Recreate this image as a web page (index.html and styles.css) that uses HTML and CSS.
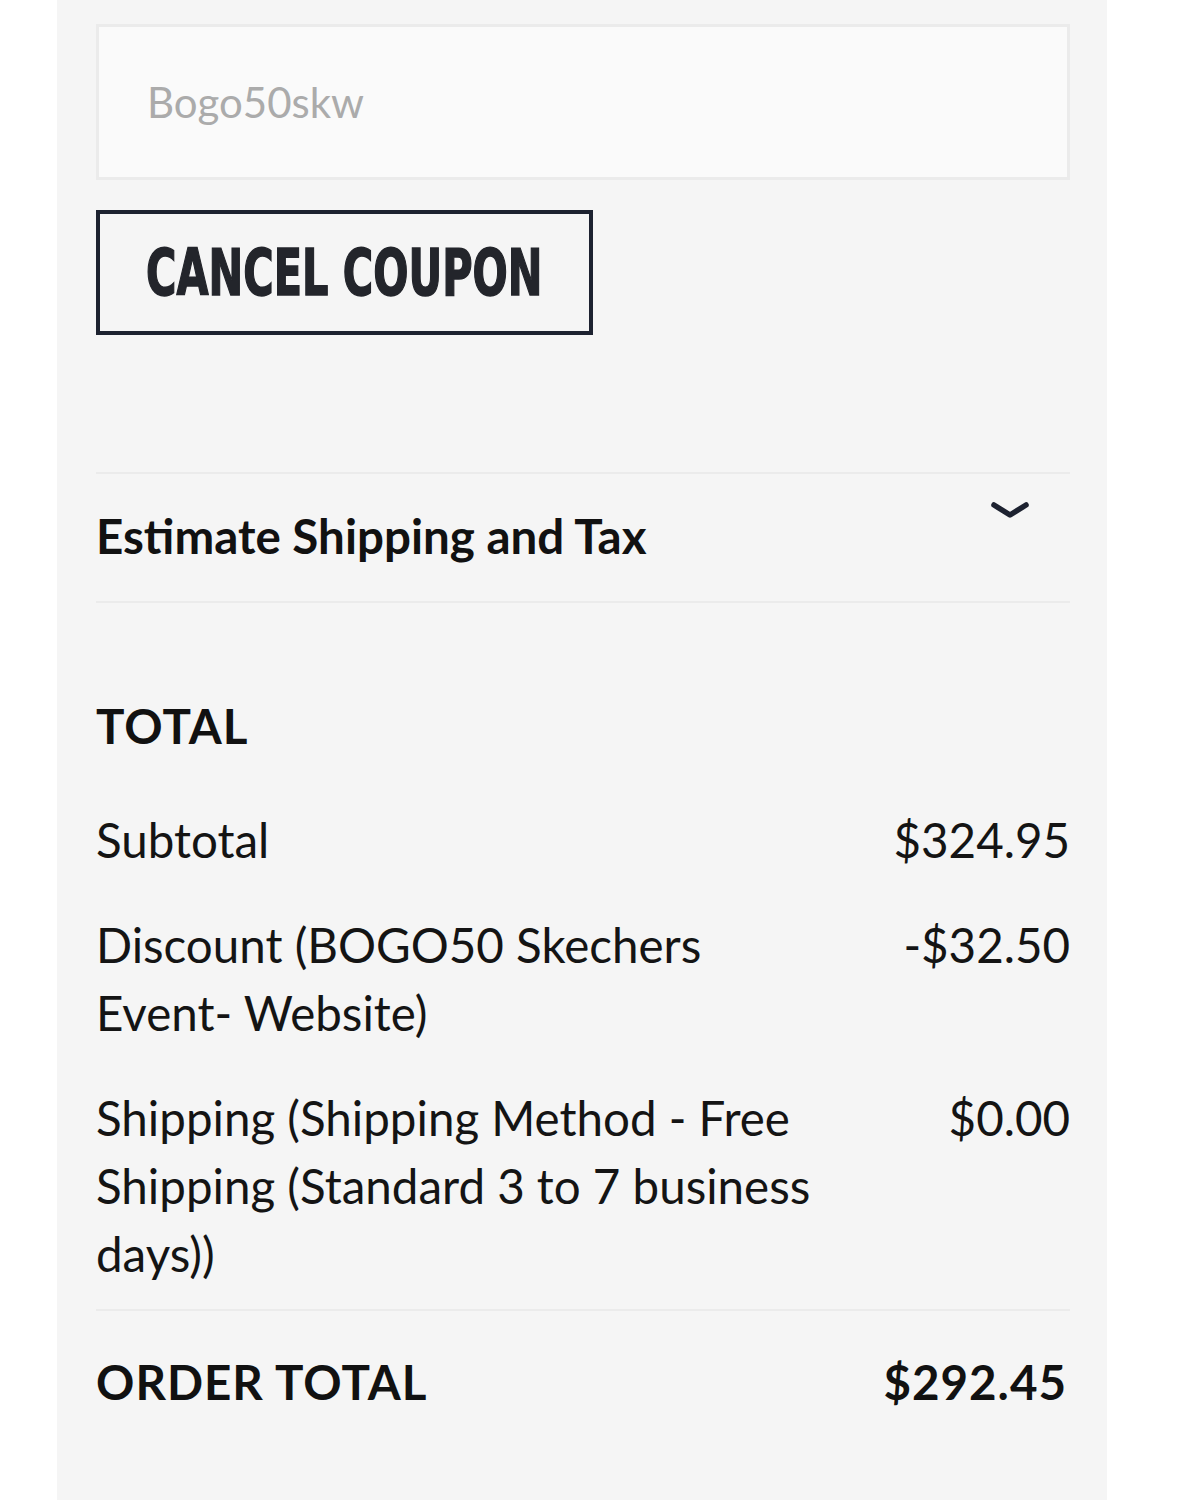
FILE: index.html
```html
<!DOCTYPE html>
<html lang="en">
<head>
<meta charset="utf-8">
<title>Cart summary</title>
<link rel="stylesheet" href="styles.css">
</head>
<body>
<div class="panel">
  <div class="coupon">
    <input class="coupon-input" type="text" placeholder="Bogo50skw">
  </div>
  <button class="cancel-btn" type="button"><span class="cancel-label">CANCEL COUPON</span></button>

  <div class="estimate">
    <span class="estimate-title">Estimate Shipping and Tax</span>
    <svg class="chevron" viewBox="0 0 40 20" width="40" height="20" aria-hidden="true">
      <path d="M4 5 L20 15 L36 5" fill="none" stroke="#1d2230" stroke-width="5.5" stroke-linecap="round" stroke-linejoin="round"/>
    </svg>
  </div>

  <div class="totals">
    <div class="totals-heading">TOTAL</div>
    <div class="line">
      <span class="line-label">Subtotal</span>
      <span class="line-value">$324.95</span>
    </div>
    <div class="line">
      <span class="line-label">Discount (BOGO50 Skechers Event- Website)</span>
      <span class="line-value">-$32.50</span>
    </div>
    <div class="line">
      <span class="line-label">Shipping (Shipping Method - Free Shipping (Standard 3 to 7 business days))</span>
      <span class="line-value">$0.00</span>
    </div>
  </div>

  <div class="order-total">
    <span class="order-label">ORDER TOTAL</span>
    <span class="order-value">$292.45</span>
  </div>
</div>
</body>
</html>
```
FILE: styles.css
```css
html, body {
  margin: 0;
  padding: 0;
  background: #ffffff;
}

body {
  font-family: Lato, "Noto Sans", "Liberation Sans", sans-serif;
  color: #141414;
}

.panel {
  margin-left: 57px;
  width: 1050px;
  min-height: 1500px;
  box-sizing: border-box;
  padding: 24px 37px 0 39px;
  background: #f5f5f5;
}

.coupon-input {
  display: block;
  width: 100%;
  height: 156px;
  box-sizing: border-box;
  margin: 0;
  padding: 0 0 0 48px;
  border: 3px solid #ebebeb;
  background: #fafafa;
  font-family: Lato, "Noto Sans", sans-serif;
  font-size: 42px;
  color: #333;
  outline: none;
}

.coupon-input::placeholder {
  color: #ababab;
}

.cancel-btn {
  display: flex;
  align-items: center;
  justify-content: center;
  margin-top: 30px;
  width: 497px;
  height: 125px;
  box-sizing: border-box;
  padding: 0;
  border: 4px solid #1d2230;
  background: transparent;
  color: #23252b;
  cursor: pointer;
}

.cancel-label {
  display: inline-block;
  font-family: "Liberation Sans Narrow", "DejaVu Sans Condensed", "Liberation Sans", sans-serif;
  font-weight: 700;
  font-size: 64px;
  line-height: 1;
  transform: scaleX(0.72);
  -webkit-text-stroke: 1.5px #23252b;
  white-space: nowrap;
}

.estimate {
  margin-top: 137px;
  height: 131px;
  box-sizing: border-box;
  border-top: 2px solid #ebebeb;
  border-bottom: 2px solid #ebebeb;
  display: flex;
  justify-content: space-between;
  align-items: flex-start;
  padding: 0 40px 0 0;
}

.estimate-title {
  margin-top: 28px;
  font-weight: 700;
  font-size: 47.5px;
  line-height: 68px;
  color: #111;
}

.chevron {
  margin-top: 26px;
  display: block;
}

.totals {
  margin-top: 89px;
  padding-bottom: 21px;
  border-bottom: 2px solid #ebebeb;
  display: flex;
  flex-direction: column;
  gap: 37px;
}

.totals-heading {
  font-weight: 700;
  font-size: 47.5px;
  line-height: 68px;
  letter-spacing: 1px;
  margin-bottom: 9px;
  color: #111;
}

.line {
  display: flex;
  justify-content: space-between;
  align-items: flex-start;
  font-size: 47.5px;
  line-height: 68px;
}

.line-label {
  width: 740px;
}

.line-value {
  text-align: right;
  white-space: nowrap;
}

.order-total {
  margin-top: 37px;
  display: flex;
  justify-content: space-between;
  font-weight: 700;
  font-size: 47.5px;
  line-height: 68px;
  letter-spacing: 1px;
  color: #111;
}

.order-value {
  padding-right: 3px;
}
```
